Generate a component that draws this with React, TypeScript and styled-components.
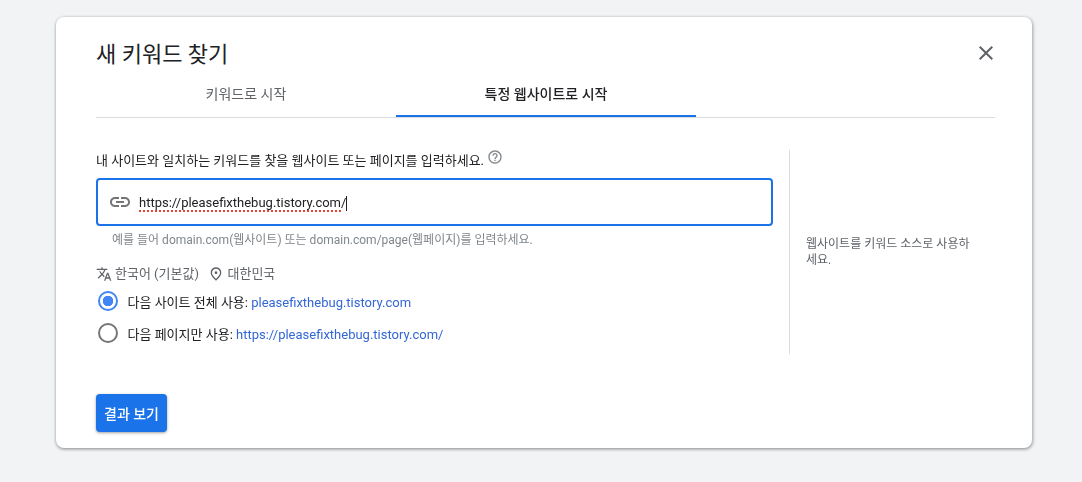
import React from "react";
import styled, { createGlobalStyle } from "styled-components";

const GlobalStyle = createGlobalStyle`
  html, body {
    margin: 0;
    padding: 0;
    background: #f1f3f4;
    font-family: Roboto, "Noto Sans CJK KR", sans-serif;
  }
`;

const Icon: React.FC<{ d: string; size: number; color: string }> = ({ d, size, color }) => (
  <svg width={size} height={size} viewBox="0 0 24 24" fill={color} style={{ display: "block", flexShrink: 0 }}>
    <path d={d} />
  </svg>
);

const ICONS = {
  close: "M19 6.41L17.59 5 12 10.59 6.41 5 5 6.41 10.59 12 5 17.59 6.41 19 12 13.41 17.59 19 19 17.59 13.41 12z",
  link: "M3.9 12c0-1.71 1.39-3.1 3.1-3.1h4V7H7c-2.76 0-5 2.24-5 5s2.24 5 5 5h4v-1.9H7c-1.71 0-3.1-1.39-3.1-3.1zM8 13h8v-2H8v2zm9-6h-4v1.9h4c1.71 0 3.1 1.39 3.1 3.1s-1.39 3.1-3.1 3.1h-4V17h4c2.76 0 5-2.24 5-5s-2.24-5-5-5z",
  help: "M11 18h2v-2h-2v2zm1-16C6.48 2 2 6.48 2 12s4.48 10 10 10 10-4.48 10-10S17.52 2 12 2zm0 18c-4.41 0-8-3.59-8-8s3.59-8 8-8 8 3.59 8 8-3.59 8-8 8zm0-14c-2.21 0-4 1.79-4 4h2c0-1.1.9-2 2-2s2 .9 2 2c0 2-3 1.75-3 5h2c0-2.25 3-2.5 3-5 0-2.21-1.79-4-4-4z",
  translate: "M12.87 15.07l-2.54-2.51.03-.03c1.74-1.94 2.98-4.17 3.71-6.53H17V4h-7V2H8v2H1v1.99h11.17C11.5 7.92 10.44 9.75 9 11.35 8.07 10.32 7.3 9.19 6.69 8h-2c.73 1.63 1.73 3.17 2.98 4.56l-5.09 5.02L4 19l5-5 3.11 3.11.76-2.04zM18.5 10h-2L12 22h2l1.12-3h4.75L21 22h2l-4.5-12zm-2.62 7l1.62-4.33L19.12 17h-3.24z",
  place: "M12 12c-1.1 0-2-.9-2-2s.9-2 2-2 2 .9 2 2-.9 2-2 2zm6-1.8C18 6.57 15.35 4 12 4s-6 2.57-6 6.2c0 2.34 1.95 5.44 6 9.14 4.05-3.7 6-6.8 6-9.14zM12 2c4.2 0 8 3.22 8 8.2 0 3.32-2.67 7.25-8 11.8-5.33-4.55-8-8.48-8-11.8C4 5.22 7.8 2 12 2z",
};

const App: React.FC = () => {
  return (
    <Page>
      <GlobalStyle />
      <Card>
        <Header>
          <Title>새 키워드 찾기</Title>
          <Icon d={ICONS.close} size={24} color="#5f6368" />
        </Header>
        <Tabs>
          <Tab>키워드로 시작</Tab>
          <Tab $active>특정 웹사이트로 시작</Tab>
        </Tabs>
        <Body>
          <Main>
            <Prompt>
              내 사이트와 일치하는 키워드를 찾을 웹사이트 또는 페이지를 입력하세요.
              <HelpIcon>
                <Icon d={ICONS.help} size={16} color="#80868b" />
              </HelpIcon>
            </Prompt>
            <InputBox>
              <Icon d={ICONS.link} size={24} color="#757575" />
              <InputText>
                <span>
                  <Misspelled>https://pleasefixthebug.tistory.com</Misspelled>/
                </span>
              </InputText>
            </InputBox>
            <Hint>예를 들어 domain.com(웹사이트) 또는 domain.com/page(웹페이지)를 입력하세요.</Hint>
            <Locale>
              <LocaleItem>
                <Icon d={ICONS.translate} size={16} color="#5f6368" />
                한국어 (기본값)
              </LocaleItem>
              <LocaleItem>
                <Icon d={ICONS.place} size={16} color="#5f6368" />
                대한민국
              </LocaleItem>
            </Locale>
            <RadioGroup>
              <RadioRow>
                <Radio $checked />
                <span>
                  다음 사이트 전체 사용: <SiteLink>pleasefixthebug.tistory.com</SiteLink>
                </span>
              </RadioRow>
              <RadioRow>
                <Radio />
                <span>
                  다음 페이지만 사용: <SiteLink>https://pleasefixthebug.tistory.com/</SiteLink>
                </span>
              </RadioRow>
            </RadioGroup>
          </Main>
          <Side>
            <SideText>웹사이트를 키워드 소스로 사용하세요.</SideText>
          </Side>
        </Body>
        <Footer>
          <PrimaryButton>결과 보기</PrimaryButton>
        </Footer>
      </Card>
    </Page>
  );
};

export default App;

const Page = styled.div`
  width: 1082px;
  height: 482px;
  padding: 17px 50px 0 56px;
  box-sizing: border-box;
  overflow: hidden;
`;

const Card = styled.div`
  width: 976px;
  height: 431px;
  box-sizing: border-box;
  padding: 0 37px 0 40px;
  background: #fff;
  border-radius: 8px;
  box-shadow: 0 1px 3px rgba(60, 64, 67, 0.4), 1px 1px 3px 1px rgba(60, 64, 67, 0.18);
`;

const Header = styled.div`
  display: flex;
  justify-content: space-between;
  align-items: center;
  height: 58px;
  box-sizing: border-box;
  margin-right: -3px;
  padding-top: 14px;
`;

const Title = styled.h1`
  margin: 4px 0 0;
  font-size: 22px;
  font-weight: 400;
  line-height: 32px;
  color: #202124;
`;

const Tabs = styled.div`
  display: flex;
  height: 42px;
  border-bottom: 1px solid #dadce0;
  will-change: transform;
`;

const Tab = styled.div<{ $active?: boolean }>`
  width: 300px;
  height: 42px;
  box-sizing: border-box;
  display: flex;
  align-items: center;
  justify-content: center;
  padding-bottom: ${(p) => (p.$active ? 5 : 7)}px;
  font-size: 14px;
  font-weight: ${(p) => (p.$active ? 500 : 400)};
  color: ${(p) => (p.$active ? "#202124" : "#5f6368")};
  border-bottom: ${(p) => (p.$active ? "2px solid #1a73e8" : "none")};
`;

const Body = styled.div`
  display: flex;
  margin-top: 32px;
  height: 204px;
  will-change: transform;
`;

const Main = styled.div`
  width: 677px;
`;

const Prompt = styled.div`
  display: flex;
  font-size: 13px;
  line-height: 20px;
  color: #202124;
  height: 28px;
  padding-top: 1px;
  box-sizing: border-box;
`;

const HelpIcon = styled.span`
  margin: -2px 0 0 3px;
`;

const InputBox = styled.div`
  display: flex;
  align-items: center;
  gap: 7px;
  height: 48px;
  box-sizing: border-box;
  padding: 0 10px;
  border: 2px solid #1a73e8;
  border-radius: 4px;
`;

const InputText = styled.div`
  display: flex;
  margin-top: 2px;
  padding-bottom: 2px;
  font-size: 13px;
  line-height: 13px;
  color: #202124;
  border-right: 1px solid #202124;
`;

const Misspelled = styled.span`
  position: relative;
  &::after {
    content: "";
    position: absolute;
    left: 0;
    right: 0;
    bottom: -2px;
    height: 2px;
    background: repeating-linear-gradient(90deg, #ea4335 0 2px, transparent 2px 4px);
  }
`;

const Hint = styled.div`
  margin: 6px 0 0 16px;
  font-size: 12px;
  line-height: 16px;
  color: #80868b;
`;

const Locale = styled.div`
  display: flex;
  align-items: center;
  gap: 9.5px;
  margin-top: 16px;
  font-size: 13px;
  line-height: 20px;
  color: #5f6368;
`;

const LocaleItem = styled.div`
  display: flex;
  align-items: center;
  gap: 3px;
`;

const RadioGroup = styled.div`
  margin-top: 1px;
`;

const RadioRow = styled.div`
  display: flex;
  align-items: center;
  gap: 10px;
  height: 32px;
  padding-left: 1.5px;
  font-size: 13px;
  color: #202124;
`;

const Radio = styled.span<{ $checked?: boolean }>`
  width: 20px;
  height: 20px;
  box-sizing: border-box;
  flex-shrink: 0;
  border-radius: 50%;
  border: 2px solid ${(p) => (p.$checked ? "#4285f4" : "#757575")};
  background: ${(p) => (p.$checked ? "radial-gradient(circle, #4285f4 0 5px, transparent 5.5px)" : "none")};
`;

const SiteLink = styled.span`
  color: #3367d6;
`;

const Side = styled.div`
  margin-left: 16px;
  width: 206px;
  box-sizing: border-box;
  border-left: 1px solid #dadce0;
  padding: 86px 0 0 16px;
`;

const SideText = styled.div`
  width: 170px;
  font-size: 12px;
  line-height: 16px;
  color: #5f6368;
`;

const Footer = styled.div`
  margin-top: 40px;
  will-change: transform;
`;

const PrimaryButton = styled.button`
  display: block;
  height: 38px;
  width: 71px;
  padding: 0;
  border: none;
  border-radius: 4px;
  background: #1a73e8;
  color: #fff;
  font-family: inherit;
  font-size: 14px;
  font-weight: 500;
  box-shadow: 0 1px 2px rgba(60, 64, 67, 0.3), 0 1px 3px 1px rgba(60, 64, 67, 0.15);
`;
